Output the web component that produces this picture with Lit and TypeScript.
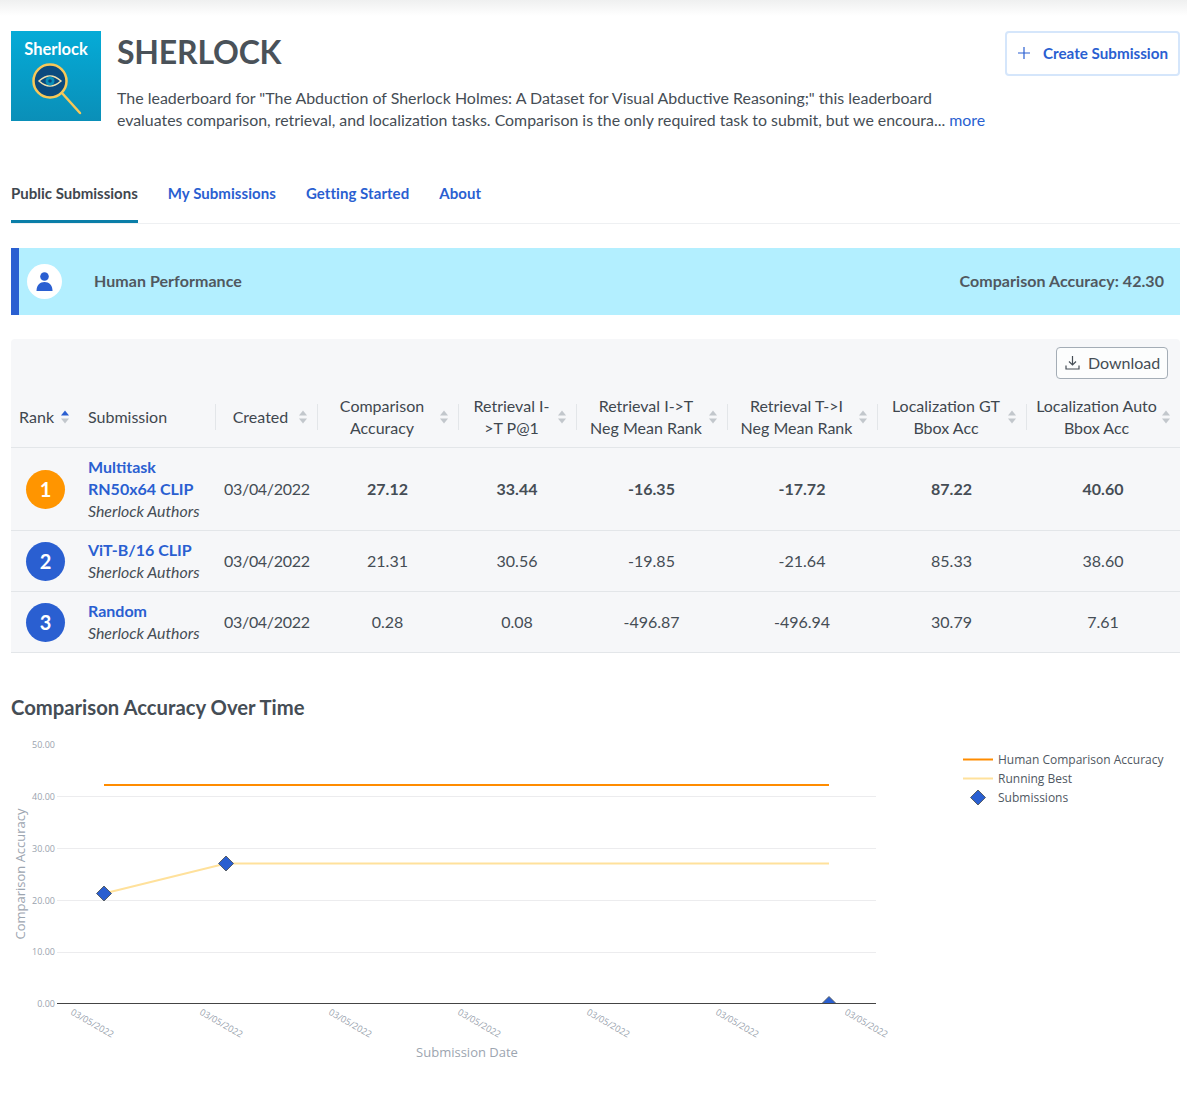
import { LitElement, html, css, svg } from 'lit';
import { customElement } from 'lit/decorators.js';

const columns = [
  { label: 'Rank', cls: 'c-rank', active: true },
  { label: 'Submission', cls: 'c-sub', plain: true },
  { label: 'Created', cls: 'c-created' },
  { label: 'Comparison Accuracy', cls: 'c-m1' },
  { label: 'Retrieval I->T P@1', cls: 'c-m2' },
  { label: 'Retrieval I->T Neg Mean Rank', cls: 'c-m3' },
  { label: 'Retrieval T->I Neg Mean Rank', cls: 'c-m4' },
  { label: 'Localization GT Bbox Acc', cls: 'c-m5' },
  { label: 'Localization Auto Bbox Acc', cls: 'c-m6' },
];

const rows = [
  { rank: 1, name: 'Multitask RN50x64 CLIP', by: 'Sherlock Authors', vals: ['27.12', '33.44', '-16.35', '-17.72', '87.22', '40.60'] },
  { rank: 2, name: 'ViT-B/16 CLIP', by: 'Sherlock Authors', vals: ['21.31', '30.56', '-19.85', '-21.64', '85.33', '38.60'] },
  { rank: 3, name: 'Random', by: 'Sherlock Authors', vals: ['0.28', '0.08', '-496.87', '-496.94', '30.79', '7.61'] },
];

@customElement('app-root')
export class AppRoot extends LitElement {
  static styles = css`
    :host {
      display: block;
      height: 1104px;
      padding: 0 7px 0 11px;
      box-sizing: border-box;
      position: relative;
      font-family: Lato, "Liberation Sans", sans-serif;
      color: #454d55;
      background: #fff;
      overflow: hidden;
    }
    .top-shade {
      position: absolute;
      left: 0;
      right: 0;
      top: 0;
      height: 16px;
      background: linear-gradient(#eff0f0, #fff);
    }
    .header {
      display: flex;
      padding-top: 31px;
      position: relative;
    }
    .logo { width: 90px; height: 90px; flex: none; display: block; }
    .intro { margin-left: 16px; width: 880px; margin-top: -1px; }
    h1 {
      margin: 0;
      font-size: 32px;
      line-height: 44px;
      font-weight: 700;
      color: #4a5259;
      letter-spacing: -0.2px;
    }
    .desc {
      margin: 13px 0 0;
      font-size: 15.96px;
      line-height: 22px;
    }
    .desc .second { font-size: 15.88px; }
    .desc a { color: #2a5fd1; }
    .create {
      margin-left: auto;
      height: 45px;
      width: 175px;
      box-sizing: border-box;
      border: 2px solid #d5e6fb;
      border-radius: 4px;
      background: #fff;
      color: #2a5fd1;
      font: 700 15.2px Lato, sans-serif;
      display: flex;
      align-items: center;
      justify-content: flex-end;
      gap: 13px;
      padding: 0 10px 2px 0;
    }
    .tabs {
      display: flex;
      gap: 30px;
      margin-top: 41px;
      border-bottom: 1px solid #eef0f2;
      height: 51px;
      font-size: 15px;
      font-weight: 700;
    }
    .tab {
      color: #2a5fd1;
      padding-top: 12px;
      box-sizing: border-box;
      height: 51px;
      letter-spacing: 0.06px;
    }
    .tab.on { color: #3f474f; border-bottom: 3px solid #0a7ea8; letter-spacing: 0; }
    .human {
      margin-top: 24px;
      height: 67px;
      background: #b3efff;
      border-left: 8px solid #2a5fd1;
      display: flex;
      align-items: center;
      padding: 0 16px 0 8px;
      font-size: 16px;
      font-weight: 700;
      color: #50585f;
      letter-spacing: 0.05px;
    }
    .human span { margin-top: -2px; }
    .avatar {
      width: 35px;
      height: 35px;
      border-radius: 50%;
      background: #fff;
      display: flex;
      align-items: center;
      justify-content: center;
      margin-right: 32px;
    }
    .human .score { margin-left: auto; }
    .board {
      margin-top: 24px;
      background: #f6f7f9;
      border-radius: 4px 4px 0 0;
    }
    .tools {
      display: flex;
      justify-content: flex-end;
      padding: 8px 12px 0 0;
      height: 32px;
    }
    .download {
      width: 112px;
      height: 32px;
      box-sizing: border-box;
      border: 1px solid #a4adb6;
      border-radius: 4px;
      background: #fcfdfd;
      color: #454d55;
      font: 16px Lato, sans-serif;
      display: flex;
      align-items: center;
      gap: 8px;
      padding: 0 0 2px 8px;
    }
    .row {
      display: grid;
      grid-template-columns: 77px 127px 102px 141px 118px 151px 150px 149px 154px;
      align-items: center;
      border-bottom: 1px solid #e3e6e9;
    }
    .head { height: 68px; font-size: 16px; line-height: 22px; color: #3f474f; }
    .th {
      display: flex;
      align-items: center;
      justify-content: center;
      height: 44px;
      text-align: center;
      position: relative;
      margin-top: 7px;
      padding: 0 9px 0 11px;
    }
    .th + .th.ruled { border-left: 1px solid #e3e6e9; height: 26px; }
    .th.ruled .label { margin: -9px 0 -9px; }
    .th .label { flex: 1; }
    .th.c-rank, .th.c-sub { padding-left: 0; }
    .th.c-rank { padding-left: 8px; padding-right: 6px; justify-content: flex-start; }
    .th.c-rank .label { flex: none; letter-spacing: 0.1px; }
    .th.c-m6 { padding-left: 9px; }
    .th.c-rank .label, .th.c-sub .label { text-align: left; }
    .th.c-rank .arrows { margin-left: 6px; }
    .arrows { flex: none; width: 10px; display: block; margin-left: 4px; }
    .cell { text-align: center; font-size: 16px; color: #454d55; margin-top: -2px; }
    .bold .cell { font-weight: 700; }
    .badge {
      width: 39px;
      height: 39px;
      border-radius: 50%;
      margin-left: 15px;
      color: #fff;
      font-size: 20px;
      font-weight: 700;
      display: flex;
      align-items: center;
      justify-content: center;
      background: #2a5fd1;
    }
    .badge.first { background: #ff9500; }
    .name { line-height: 22px; text-align: left; font-size: 16px; white-space: normal; }
    .name b { color: #2a5fd1; display: block; padding-right: 20px; }
    .name i { display: block; font-size: 15.9px; white-space: nowrap; }
    .data { padding: 8px 0; }
    .data.tall { height: 83px; box-sizing: border-box; }
    .data.short { height: 61px; box-sizing: border-box; }
    .cell.created {
      white-space: nowrap;
      padding-left: 9px;
      text-align: left;
      font-weight: 400;
      letter-spacing: -0.3px;
    }
    h2 {
      margin: 41px 0 0;
      font-size: 20.25px;
      line-height: 26px;
      font-weight: 700;
      color: #454d55;
    }
    .chart { display: block; margin-top: 13px; }
    .chart text { font-family: "Open Sans", sans-serif; }
    .tick { font-size: 9px; fill: #9aa3ae; }
    .axis { font-size: 13px; fill: #9ca5b0; }
    .legend { font-size: 12px; fill: #4f5862; }
  `;

  renderArrows(active?: boolean) {
    return html`<svg class="arrows" viewBox="0 0 10 16" height="16">
      <path d="M5 1.500 9 6.500H1z" fill=${active ? '#2a5fd1' : '#c2c7cc'}></path>
      <path d="M5 14.500 9 9.500H1z" fill="#c2c7cc"></path>
    </svg>`;
  }

  renderChart() {
    // chart coordinates are page coordinates shifted by the block origin (11, 733)
    const ox = -11;
    const oy = -733;
    const grid = [796, 848, 900, 952];
    const ylabels: [string, number][] = [['50.00', 745], ['40.00', 797], ['30.00', 849], ['20.00', 901], ['10.00', 952], ['0.00', 1004]];
    const xlabels = [70, 199, 328, 457, 586, 715, 844];
    const diamond = (x: number, y: number) =>
      svg`<path d="M${x} ${y - 7.5}L${x + 7.5} ${y}L${x} ${y + 7.5}L${x - 7.5} ${y}Z" fill="#2a5fd1" stroke="#565f68" stroke-width="1"></path>`;
    return html`<svg class="chart" width="1169" height="340">
      <g transform="translate(${ox} ${oy})">
        ${grid.map((y) => svg`<line x1="57" x2="876" y1=${y + 0.5} y2=${y + 0.5} stroke="#ececee"></line>`)}
        ${ylabels.map(([t, y]) => svg`<text class="tick" x="55" y=${y + 3} text-anchor="end">${t}</text>`)}
        ${xlabels.map((x) => svg`<text class="tick" transform="translate(${x} 1014) rotate(30)">03/05/2022</text>`)}
        <line x1="104" x2="829" y1="785" y2="785" stroke="#ff8c00" stroke-width="2"></line>
        <path d="M104 893.500 226 863.500H829" fill="none" stroke="#ffe19b" stroke-width="2"></path>
        ${diamond(104, 893.5)}
        ${diamond(226, 863.5)}
        ${diamond(829, 1004)}
        <rect x="815" y="1004" width="30" height="10" fill="#fff"></rect>
        <line x1="57" x2="876" y1="1003.500" y2="1003.500" stroke="#444"></line>
        <text class="axis" transform="translate(25 874) rotate(-90)" text-anchor="middle">Comparison Accuracy</text>
        <text class="axis" x="467" y="1057" text-anchor="middle">Submission Date</text>
        <line x1="963" x2="993" y1="759.500" y2="759.500" stroke="#ff8c00" stroke-width="2"></line>
        <line x1="963" x2="993" y1="778.500" y2="778.500" stroke="#ffe19b" stroke-width="2"></line>
        ${diamond(978, 797.5)}
        <text class="legend" x="998" y="764">Human Comparison Accuracy</text>
        <text class="legend" x="998" y="783">Running Best</text>
        <text class="legend" x="998" y="802">Submissions</text>
      </g>
    </svg>`;
  }

  render() {
    return html`
      <div class="top-shade"></div>
      <div class="header">
        <svg class="logo" viewBox="0 0 90 90">
          <defs>
            <linearGradient id="lg" x1="0" y1="0" x2="0" y2="1">
              <stop offset="0" stop-color="#05abd7"></stop>
              <stop offset="1" stop-color="#0a8fb8"></stop>
            </linearGradient>
          </defs>
          <rect width="90" height="90" fill="url(#lg)"></rect>
          <text x="45" y="23.500" text-anchor="middle" fill="#fff" font-family="Lato, sans-serif" font-size="16.500" font-weight="700">Sherlock</text>
          <line x1="51" y1="62" x2="69" y2="82" stroke="#f8c858" stroke-width="2.500" stroke-linecap="round"></line>
          <circle cx="39" cy="50" r="16.500" fill="#0b4a7e" stroke="#f8c858" stroke-width="2.500"></circle>
          <path d="M28 50Q39 40 50 50Q39 60 28 50Z" fill="none" stroke="#f3e3b0" stroke-width="1.500"></path>
          <circle cx="39" cy="50" r="4.500" fill="#0a8fb8"></circle>
          <circle cx="39" cy="50" r="1.800" fill="#0b4a7e"></circle>
        </svg>
        <div class="intro">
          <h1>SHERLOCK</h1>
          <p class="desc">The leaderboard for "The Abduction of Sherlock Holmes: A Dataset for Visual Abductive Reasoning;" this leaderboard<br /><span class="second">evaluates comparison, retrieval, and localization tasks. Comparison is the only required task to submit, but we encoura... <a>more</a></span></p>
        </div>
        <button class="create">
          <svg width="12" height="12" viewBox="0 0 12 12"><path d="M6 0V12M0 6H12" stroke="#2a5fd1" stroke-width="1.200"></path></svg>
          Create Submission
        </button>
      </div>
      <div class="tabs">
        <div class="tab on">Public Submissions</div>
        <div class="tab">My Submissions</div>
        <div class="tab">Getting Started</div>
        <div class="tab">About</div>
      </div>
      <div class="human">
        <div class="avatar">
          <svg width="17" height="19" viewBox="0 0 17 19">
            <circle cx="8.500" cy="4.500" r="4.300" fill="#2a5fd1"></circle>
            <path d="M.5 19C.5 13 4 10 8.500 10S16.500 13 16.500 19Z" fill="#2a5fd1"></path>
          </svg>
        </div>
        <span>Human Performance</span>
        <span class="score">Comparison Accuracy: 42.30</span>
      </div>
      <div class="board">
        <div class="tools">
          <button class="download">
            <svg width="15" height="15" viewBox="0 0 15 15" fill="none" stroke="#454d55" stroke-width="1.200">
              <path d="M7.500 1V10M4 6.500 7.500 10 11 6.500M1 10.500V14H14V10.500"></path>
            </svg>
            Download
          </button>
        </div>
        <div class="row head">
          ${columns.map(
            (c, i) => html`<div class="th ${c.cls} ${i > 1 ? 'ruled' : ''}">
              <span class="label">${c.label}</span>
              ${c.plain ? '' : this.renderArrows(c.active)}
            </div>`,
          )}
        </div>
        ${rows.map(
          (r, i) => html`<div class="row data ${i === 0 ? 'tall bold' : 'short'}">
            <div class="badge ${i === 0 ? 'first' : ''}">${r.rank}</div>
            <div class="name"><b>${r.name}</b><i>${r.by}</i></div>
            <div class="cell created">03/04/2022</div>
            ${r.vals.map((v) => html`<div class="cell">${v}</div>`)}
          </div>`,
        )}
      </div>
      <h2>Comparison Accuracy Over Time</h2>
      ${this.renderChart()}
    `;
  }
}
